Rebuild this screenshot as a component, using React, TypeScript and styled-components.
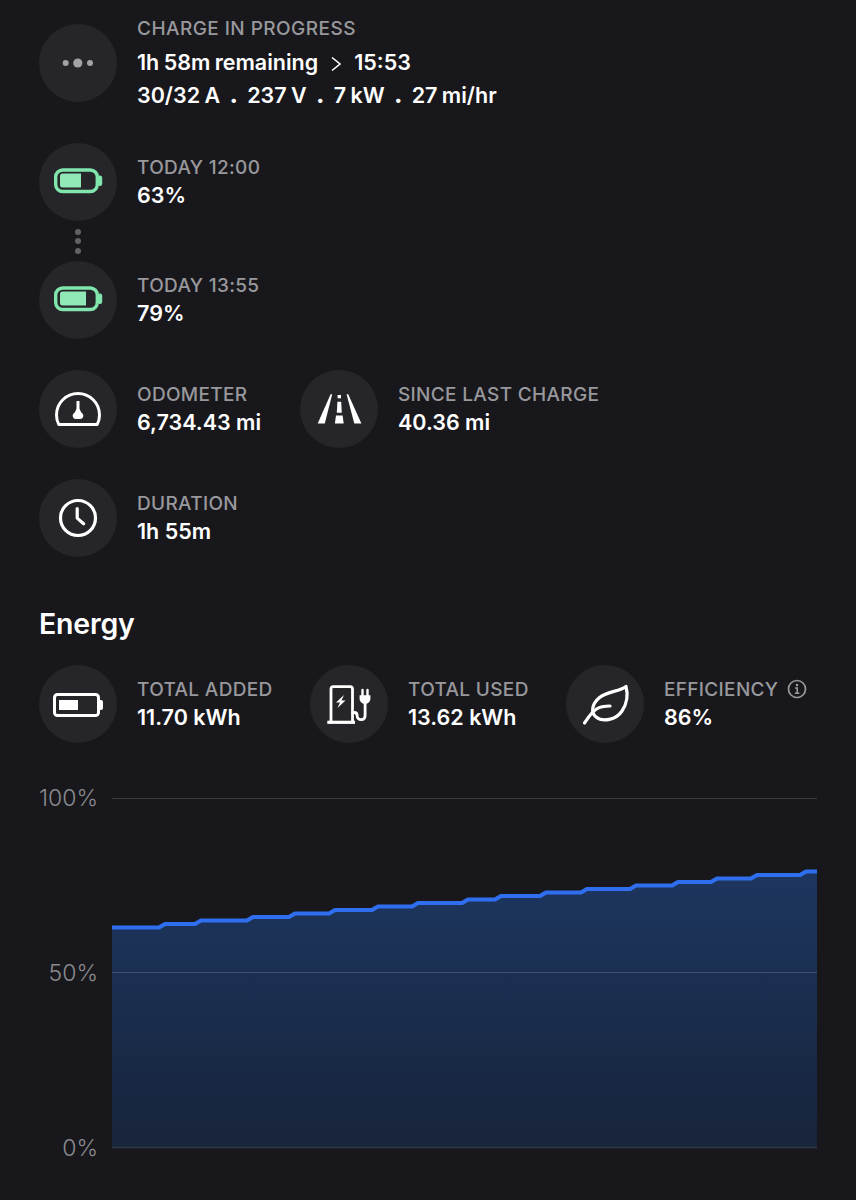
import React from 'react';
import styled, { createGlobalStyle } from 'styled-components';

const GlobalStyle = createGlobalStyle`
  html, body {
    margin: 0;
    padding: 0;
    background: #18181c;
  }
  body {
    font-family: Inter, "Liberation Sans", sans-serif;
    -webkit-font-smoothing: antialiased;
  }
`;

const Page = styled.div`
  width: 856px;
  height: 1200px;
  box-sizing: border-box;
  padding: 24px 39px 0;
  background: #18181c;
  overflow: hidden;
  display: flex;
  flex-direction: column;
`;

const Row = styled.div<{ $after?: number }>`
  display: flex;
  align-items: center;
  margin-bottom: ${(p) => p.$after ?? 31}px;
`;

const Stat = styled.div<{ $width?: number }>`
  display: flex;
  align-items: center;
  gap: 20px;
  height: 78px;
  flex: 0 0 ${(p) => (p.$width ? `${p.$width}px` : 'auto')};
`;

const Circle = styled.div`
  width: 78px;
  height: 78px;
  flex: none;
  border-radius: 50%;
  background: #26262a;
  svg {
    display: block;
  }
`;

const Text = styled.div`
  display: flex;
  flex-direction: column;
  margin-top: -2px;
`;

const DetailText = styled(Text)`
  margin-top: 0;
`;

const Label = styled.div`
  display: flex;
  align-items: center;
  gap: 9px;
  font-size: 19px;
  line-height: 27px;
  font-weight: 500;
  letter-spacing: 0.33px;
  color: #98989d;
  white-space: nowrap;
`;

const DetailLabel = styled(Label)`
  line-height: 28px;
  letter-spacing: 0.45px;
  margin-bottom: 3px;
`;

const Value = styled.div`
  font-size: 21.5px;
  line-height: 28px;
  font-weight: 600;
  color: #fff;
  white-space: nowrap;
`;

const DetailLine = styled(Value)`
  display: flex;
  align-items: center;
  line-height: 33px;
  word-spacing: -1px;
`;

const Dot = styled.span`
  width: 27px;
  text-align: center;
  font-weight: 800;
  font-size: 24px;
  line-height: 28px;
`;

const Chevron = styled.svg`
  margin: 3px 13px 0 13px;
`;

const Connector = styled.div`
  width: 78px;
  height: 40px;
  display: flex;
  flex-direction: column;
  align-items: center;
  justify-content: center;
  gap: 3.5px;
`;

const ConnectorDot = styled.span`
  width: 6px;
  height: 6px;
  border-radius: 50%;
  background: #626266;
`;

const Heading = styled.h2`
  margin: 44px 0 0;
  font-size: 28.5px;
  line-height: 46px;
  font-weight: 600;
  letter-spacing: -0.2px;
  color: #fff;
`;

const EnergyRow = styled(Row)`
  margin-top: 18px;
  margin-bottom: 42px;
`;

const Chart = styled.div`
  display: flex;
  gap: 14px;
  margin-top: 13px;
`;

const Axis = styled.div`
  width: 59px;
  height: 376px;
  margin: -13px 0;
  display: flex;
  flex-direction: column;
  justify-content: space-between;
  align-items: flex-end;
`;

const AxisLabel = styled.span`
  font-size: 23px;
  line-height: 26px;
  font-weight: 300;
  color: #8a8a8f;
`;

const Plot = styled.svg`
  display: block;
  flex: none;
`;

const Stack = styled.div`
  display: flex;
  flex-direction: column;
`;

const ICON = { width: 78, height: 78, viewBox: '0 0 78 78' };

const ProgressIcon = () => (
  <svg {...ICON} fill="#a3a3a7">
    <circle cx="26.7" cy="39" r="3" />
    <circle cx="38.8" cy="39" r="4.6" />
    <circle cx="51" cy="39" r="3" />
  </svg>
);

const ChargeBattery = ({ level }: { level: number }) => (
  <svg {...ICON}>
    <rect x="16.7" y="27" width="41.6" height="21.5" rx="7" fill="none" stroke="#80e6ad" strokeWidth="3.4" />
    <path d="M60 32.5h1a2.2 2.2 0 0 1 2.2 2.2v6a2.2 2.2 0 0 1-2.2 2.2H60z" fill="#80e6ad" />
    <path d={`M23.5 30.5H${21 + level}v14H23.5a2.5 2.5 0 0 1-2.5-2.5v-9a2.5 2.5 0 0 1 2.5-2.5z`} fill="#8fe8b6" />
  </svg>
);

const AddedBattery = () => (
  <svg {...ICON}>
    <rect x="15.5" y="29.5" width="44" height="21" rx="3" fill="none" stroke="#fff" strokeWidth="3" />
    <path d="M61 35h1a2 2 0 0 1 2 2v6a2 2 0 0 1-2 2h-1z" fill="#fff" />
    <rect x="20" y="35" width="19" height="10" fill="#fff" />
  </svg>
);

const GaugeIcon = () => (
  <svg {...ICON} fill="none" stroke="#fff" strokeWidth="3">
    <path d="M19.8 54.5h38.4c1.6-2.8 2.3-6 2.3-9.5a21.5 21.5 0 0 0-43 0c0 3.5.7 6.7 2.3 9.5z" strokeLinejoin="round" />
    <path d="M39 31v10" strokeWidth="3" />
    <path d="M37.5 39h3l1.8 3.5c1.3.9 2 2 2 3.3 0 2-1.3 3.2-3 3.2h-4.600c-1.700 0-3-1.200-3-3.200 0-1.300.7-2.400 2-3.300z" fill="#fff" stroke="none" />
  </svg>
);

const RoadIcon = () => (
  <svg {...ICON} fill="#fff">
    <path d="M30.6 24.3h1.6L24.8 53.4h-7.1z" />
    <path d="M46.6 24.3h1.6l13.2 29.1h-7.1z" />
    <rect x="37.6" y="25" width="3.4" height="3.3" />
    <path d="M37.4 31.7h3.8l.6 11h-5z" />
    <path d="M36 45.5h6.6l1.1 7.9h-8.8z" />
  </svg>
);

const ClockIcon = () => (
  <svg {...ICON} fill="none" stroke="#fff" strokeWidth="3.2" strokeLinecap="round" strokeLinejoin="round">
    <circle cx="39" cy="39" r="17.5" />
    <path d="M38.2 29.5v9.6l6.4 5.6" />
  </svg>
);

const ChargerIcon = () => (
  <svg {...ICON} fill="none" stroke="#fff" strokeWidth="2.8">
    <path d="M21 57V24a2.4 2.4 0 0 1 2.4-2.4h16.7a2.4 2.4 0 0 1 2.4 2.4v33" />
    <path d="M17.3 57.3h27.7" strokeWidth="3.2" />
    <path d="M34 30l-8 7.500h4l-2.500 5.500 8-7.500h-4z" fill="#fff" stroke="none" />
    <path d="M42.5 47.5h1.800c2 0 2.800 1.400 2.800 3 0 2.500 1.700 4.200 4 4.200 2.600 0 4-1.800 4-4.400V38" strokeLinecap="round" />
    <path d="M49.6 30.2h10.8v3.4c0 3-2.200 5.400-5.400 5.400s-5.400-2.400-5.400-5.400z" fill="#fff" stroke="none" />
    <path d="M52.5 25v6M57.5 25v6" strokeWidth="2.4" strokeLinecap="round" />
  </svg>
);

const LeafIcon = () => (
  <svg {...ICON} fill="none" stroke="#fff" strokeWidth="3.2" strokeLinecap="round" strokeLinejoin="round">
    <path d="M60 21.5C53 27 41 26 33 33c-7 6-8.500 14.500-3 19 7 5.500 20 3 26-6 5-7.500 6-17 4-24.500z" />
    <path d="M18.5 58c3.500-5 6.500-10.500 12-14 4-2.500 9-3 13.500-3" />
  </svg>
);

const InfoIcon = () => (
  <svg width="20" height="20" viewBox="0 0 20 20" fill="none" stroke="#98989d">
    <circle cx="10" cy="10" r="8.5" strokeWidth="1.7" />
    <circle cx="10" cy="6" r="1.3" fill="#98989d" stroke="none" />
    <path d="M8 9h2.200v5.300M7.800 14.300h4.600" strokeWidth="1.6" />
  </svg>
);

// x position (in plot px) where the line climbs to the next percent
const STEPS = [50, 86, 138, 180, 220, 263, 303, 353, 386, 431, 472, 521, 563, 602, 642, 691];
const START = 63;
const W = 705;
const H = 350;
const yFor = (pct: number) => H * (1 - pct / 100);

const linePath = () => {
  let d = `M0 ${yFor(START)}`;
  STEPS.forEach((x, i) => {
    d += ` L${x - 3} ${yFor(START + i)} L${x + 3} ${yFor(START + i + 1)}`;
  });
  return `${d} L${W} ${yFor(START + STEPS.length)}`;
};

const EnergyChart = () => {
  const line = linePath();
  return (
    <Plot width={W} height={H + 2} viewBox={`0 0 ${W} ${H + 2}`}>
      <defs>
        <linearGradient id="area" x1="0" y1="0" x2="0" y2="1">
          <stop offset="0" stopColor="#1d3660" />
          <stop offset="1" stopColor="#17243a" />
        </linearGradient>
      </defs>
      <line x1="0" x2={W} y1="0.5" y2="0.5" stroke="#3a3a3f" strokeWidth="1" />
      <path d={`${line} L${W} ${H} L0 ${H} Z`} fill="url(#area)" />
      <line x1="0" x2={W} y1="174.5" y2="174.5" stroke="#43506b" strokeWidth="1" />
      <line x1="0" x2={W} y1="349.5" y2="349.5" stroke="#333846" strokeWidth="1.5" />
      <path d={line} fill="none" stroke="#2f6fef" strokeWidth="4.2" strokeLinejoin="round" />
    </Plot>
  );
};

const App: React.FC = () => {
  return (
    <Page>
      <GlobalStyle />
      <Row $after={41}>
        <Stat>
          <Circle><ProgressIcon /></Circle>
          <DetailText>
            <DetailLabel>CHARGE IN PROGRESS</DetailLabel>
            <DetailLine>
              1h 58m remaining
              <Chevron width="10" height="16" viewBox="0 0 10 16" fill="none" stroke="#fff" strokeWidth="1.6">
                <path d="M1 1.500L9 8l-8 6.500" />
              </Chevron>
              15:53
            </DetailLine>
            <DetailLine>
              30/32 A<Dot>.</Dot>237 V<Dot>.</Dot>7 kW<Dot>.</Dot>27 mi/hr
            </DetailLine>
          </DetailText>
        </Stat>
      </Row>

      <Stack>
        <Stat>
          <Circle><ChargeBattery level={21} /></Circle>
          <Text>
            <Label>TODAY 12:00</Label>
            <Value>63%</Value>
          </Text>
        </Stat>
        <Connector>
          <ConnectorDot />
          <ConnectorDot />
          <ConnectorDot />
        </Connector>
        <Row>
          <Stat>
            <Circle><ChargeBattery level={26} /></Circle>
            <Text>
              <Label>TODAY 13:55</Label>
              <Value>79%</Value>
            </Text>
          </Stat>
        </Row>
      </Stack>

      <Row>
        <Stat $width={261}>
          <Circle><GaugeIcon /></Circle>
          <Text>
            <Label>ODOMETER</Label>
            <Value>6,734.43 mi</Value>
          </Text>
        </Stat>
        <Stat>
          <Circle><RoadIcon /></Circle>
          <Text>
            <Label>SINCE LAST CHARGE</Label>
            <Value>40.36 mi</Value>
          </Text>
        </Stat>
      </Row>

      <Row $after={0}>
        <Stat>
          <Circle><ClockIcon /></Circle>
          <Text>
            <Label>DURATION</Label>
            <Value>1h 55m</Value>
          </Text>
        </Stat>
      </Row>

      <Heading>Energy</Heading>

      <EnergyRow>
        <Stat $width={271}>
          <Circle><AddedBattery /></Circle>
          <Text>
            <Label>TOTAL ADDED</Label>
            <Value>11.70 kWh</Value>
          </Text>
        </Stat>
        <Stat $width={256}>
          <Circle><ChargerIcon /></Circle>
          <Text>
            <Label>TOTAL USED</Label>
            <Value>13.62 kWh</Value>
          </Text>
        </Stat>
        <Stat>
          <Circle><LeafIcon /></Circle>
          <Text>
            <Label>EFFICIENCY <InfoIcon /></Label>
            <Value>86%</Value>
          </Text>
        </Stat>
      </EnergyRow>

      <Chart>
        <Axis>
          <AxisLabel>100%</AxisLabel>
          <AxisLabel>50%</AxisLabel>
          <AxisLabel>0%</AxisLabel>
        </Axis>
        <EnergyChart />
      </Chart>
    </Page>
  );
};

export default App;
